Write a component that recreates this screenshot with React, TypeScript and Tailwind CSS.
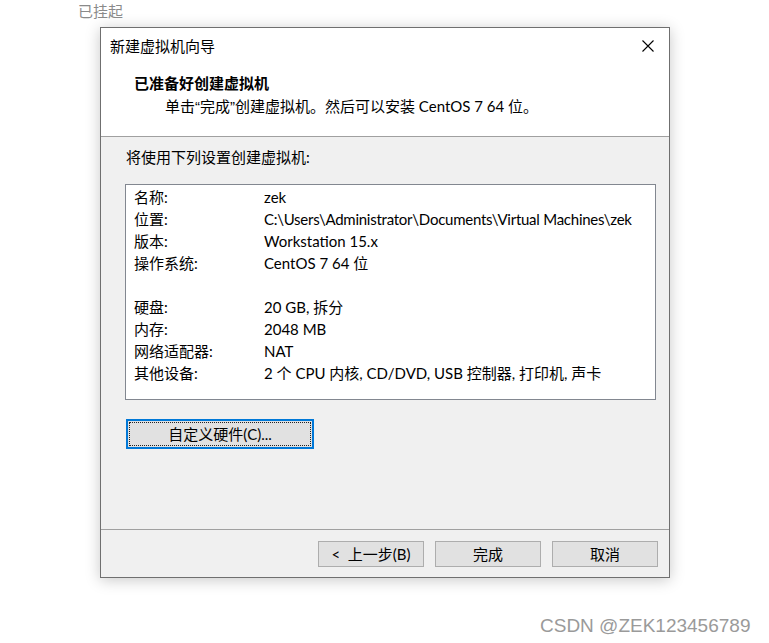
import React from "react";

const font = { fontFamily: 'Lato, "Noto Sans CJK SC", sans-serif' };

const rows: [string, string][] = [
  ["名称:", "zek"],
  ["位置:", "C:\\Users\\Administrator\\Documents\\Virtual Machines\\zek"],
  ["版本:", "Workstation 15.x"],
  ["操作系统:", "CentOS 7 64 位"],
  ["", ""],
  ["硬盘:", "20 GB, 拆分"],
  ["内存:", "2048 MB"],
  ["网络适配器:", "NAT"],
  ["其他设备:", "2 个 CPU 内核, CD/DVD, USB 控制器, 打印机, 声卡"],
];

export default function App() {
  return (
    <div
      className="relative w-[769px] h-[643px] bg-white overflow-hidden text-[15px] text-black"
      style={font}
    >
      <div className="pl-[78px] h-[27px] leading-[22px] text-[#8a8a8a]">已挂起</div>
      <div className="ml-[100px] w-[570px] h-[551px] border border-[#6f6f6f] bg-[#f0f0f0] flex flex-col shadow-[0_2px_14px_rgba(0,0,0,0.22)]">
        <div className="bg-white">
          <div className="h-[36px] flex items-center justify-between pl-[9px] pr-[15px]">
            <span className="leading-[22px]">新建虚拟机向导</span>
            <svg width="12" height="12" viewBox="0 0 12 12">
              <path d="M0.5 0.5 L11.5 11.5 M11.5 0.5 L0.5 11.5" stroke="#000" strokeWidth="1.1" />
            </svg>
          </div>
          <div className="pt-[8px] pb-[18px]">
            <div className="pl-[33px] leading-[22px] font-bold">已准备好创建虚拟机</div>
            <div className="pl-[64px] leading-[22px] mt-px">
              单击<span style={{ fontFamily: '"Liberation Sans", sans-serif' }}>“</span>完成
              <span style={{ fontFamily: '"Liberation Sans", sans-serif' }}>”</span>创建虚拟机。然后可以安装 CentOS 7 64 位。
            </div>
          </div>
        </div>
        <div className="h-px bg-[#a0a0a0]" />
        <div className="flex-1 pl-[24px] pt-[9px]">
          <div className="leading-[22px] pl-[1px]">将使用下列设置创建虚拟机:</div>
          <div className="mt-[16px] w-[531px] h-[216px] border border-[#828790] bg-white pt-px pl-[8px]">
            {rows.map(([k, v], i) => (
              <div key={i} className="h-[22px] leading-[22px] flex whitespace-nowrap">
                <span className="w-[130px] shrink-0">{k}</span>
                <span className={i === 1 ? "tracking-[-0.25px]" : ""}>{v}</span>
              </div>
            ))}
          </div>
          <div className="mt-[19px] ml-[1px] w-[188px] h-[30px] border-2 border-[#0078d7] bg-[#e1e1e1] p-px">
            <div className="h-full border border-dotted border-[#222] flex items-center justify-center leading-[22px]">
              自定义硬件(C)...
            </div>
          </div>
        </div>
        <div className="h-[48px] border-t border-[#a0a0a0] flex justify-end gap-[11px] pr-[11px] pt-[11px]">
          {["<  上一步(B)", "完成", "取消"].map((t) => (
            <div
              key={t}
              className="w-[106px] h-[26px] border border-[#adadad] bg-[#e1e1e1] flex items-center justify-center leading-[22px] whitespace-pre"
            >
              {t}
            </div>
          ))}
        </div>
      </div>
      <div
        className="absolute left-[540px] top-[613px] text-[19px] leading-[26px] text-[#9a9a9a]"
        style={{ fontFamily: '"Liberation Sans", sans-serif' }}
      >
        CSDN @ZEK123456789
      </div>
    </div>
  );
}
